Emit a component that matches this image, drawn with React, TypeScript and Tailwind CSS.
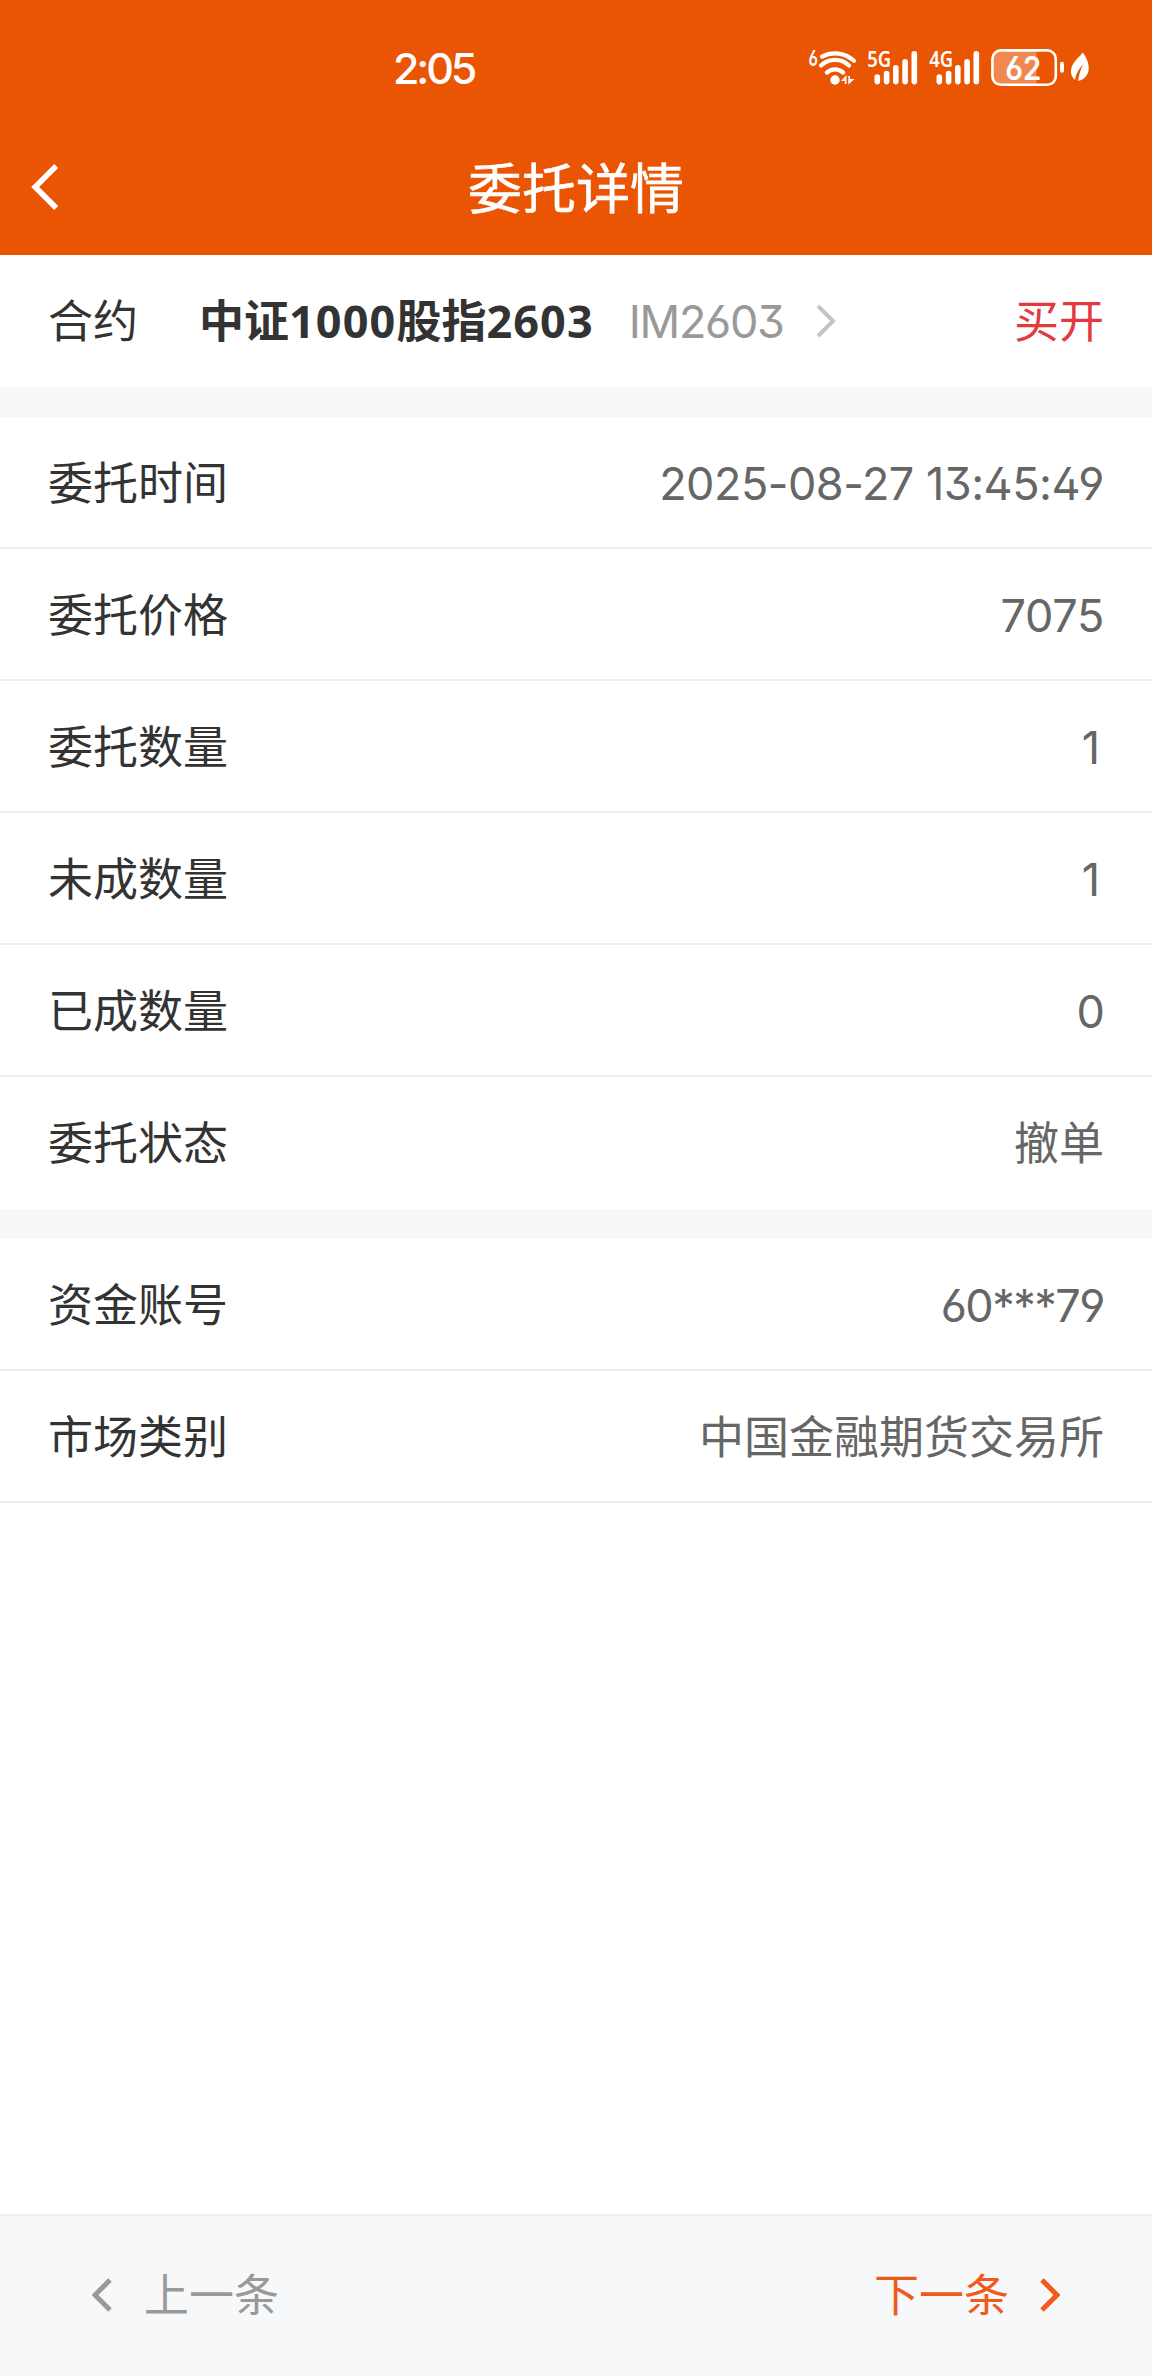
import type { ReactNode } from 'react';

const numeric = "pt-[2px] font-[Inter] [font-feature-settings:'ss01']";

const orderRows = [
  { label: '委托时间', value: '2025-08-27 13:45:49', className: `${numeric} tracking-[-0.5px]` },
  { label: '委托价格', value: '7075', className: `${numeric} tracking-[-0.3px]` },
  { label: '委托数量', value: '1', className: `${numeric} pr-[4px]` },
  { label: '未成数量', value: '1', className: `${numeric} pr-[4px]` },
  { label: '已成数量', value: '0', className: `${numeric} tracking-[-1px]` },
  { label: '委托状态', value: '撤单', className: '' },
];

const accountRows = [
  { label: '资金账号', value: '60***79', className: `${numeric} tracking-[-1.5px]` },
  { label: '市场类别', value: '中国金融期货交易所', className: '' },
];

function Chevron({ dir, className, strokeWidth = 5 }: { dir: 'left' | 'right'; className: string; strokeWidth?: number }) {
  return (
    <svg viewBox="0 0 20 34" className={className} fill="none" stroke="currentColor" strokeWidth={strokeWidth}>
      <path d={dir === 'left' ? 'M18 2 L3 17 L18 32' : 'M2 2 L17 17 L2 32'} />
    </svg>
  );
}

function WifiIcon() {
  return (
    <svg viewBox="0 -8 50 56" className="h-14 w-[50px]" fill="none" stroke="currentColor" strokeLinecap="round">
      <text x="0.5" y="17.5" fontSize="22" fontWeight="600" fill="currentColor" stroke="none" textLength="9.5" lengthAdjust="spacingAndGlyphs" className="font-[Inter] [font-feature-settings:'ss01']">
        6
      </text>
      <g strokeWidth="4.2">
        <path d="M14 8.6 A28 28 0 0 1 46 12.8" />
        <path d="M13 17.6 A20 20 0 0 1 41 17.6" />
        <path d="M18.8 24.6 A12 12 0 0 1 35.2 24.6" />
      </g>
      <circle cx="27" cy="32" r="4.7" fill="currentColor" stroke="none" />
      <path d="M33 33 L38.5 27 V36 H36.8 V33 Z M40.3 28 H42 V31 H46.5 L40.3 36.5 Z" fill="currentColor" stroke="none" />
    </svg>
  );
}

function SignalIcon({ label }: { label: string }) {
  const bars = [
    { x: 7.5, y: 26.3 },
    { x: 16.8, y: 22.7 },
    { x: 26, y: 17 },
    { x: 35.3, y: 11 },
    { x: 44.5, y: 2.9 },
  ];
  return (
    <svg viewBox="0 -8 51 56" className="h-14 w-[51px]" fill="currentColor">
      <text x="0.3" y="18.8" fontSize="22" fontWeight="600" textLength="24" lengthAdjust="spacingAndGlyphs">
        {label}
      </text>
      {bars.map((b) => (
        <rect key={b.x} x={b.x} y={b.y} width="5.6" height={36.4 - b.y} rx="2.8" />
      ))}
    </svg>
  );
}

function BatteryIcon() {
  return (
    <svg viewBox="0 -8 74 56" className="h-14 w-[74px]" fill="currentColor">
      <path d="M10 2 H45.5 V37 H10 A8 8 0 0 1 2 29 V10 A8 8 0 0 1 10 2 Z" opacity="0.3" />
      <rect x="1.4" y="2.4" width="63.4" height="34.4" rx="8.5" fill="none" stroke="currentColor" strokeWidth="2.6" />
      <rect x="69" y="13.8" width="4" height="11" rx="2" />
      <text x="14.2" y="31.6" fontSize="33" fontWeight="600" textLength="36" lengthAdjust="spacingAndGlyphs" className="font-[Inter] [font-feature-settings:'ss01']">
        62
      </text>
    </svg>
  );
}

function LeafIcon() {
  return (
    <svg viewBox="0 -8 20 56" className="h-14 w-5">
      <path d="M12.8 4.6 C17.5 11 19.5 17.5 18.5 22.5 C17.5 28.5 12.5 32.5 8 32.8 C9 27 10.5 21 13.2 16.2 C8.8 20.5 6 26 5 31.8 C0.5 28.5 0 22 2.5 17 C5 12 10 8.5 12.8 4.6 Z" fill="currentColor" />
    </svg>
  );
}

function Row({ label, className, children }: { label: string; className: string; children: ReactNode }) {
  return (
    <div className="flex h-[132px] items-center justify-between border-b-2 border-[#eeeeee] px-12 pt-[2px]">
      <span className="text-[#333333]">{label}</span>
      <span className={`text-[#666666] ${className}`}>{children}</span>
    </div>
  );
}

export default function App() {
  return (
    <div className="flex h-[2376px] w-[1152px] flex-col bg-white font-['Noto_Sans','Noto_Sans_CJK_SC',sans-serif] text-[45px] leading-[60px]">
      <header className="h-[255px] bg-[#ea5504] text-white">
        <div className="flex h-[120px] items-center pt-4 pl-[393px]">
          <span className="w-[415px] font-[Inter] text-[43px] font-medium tracking-[-3.2px]">2:05</span>
          <div className="flex items-center">
            <WifiIcon />
            <div className="ml-[9px] flex gap-[11px]">
              <SignalIcon label="5G" />
              <SignalIcon label="4G" />
            </div>
            <div className="ml-[11px] flex gap-[5px]">
              <BatteryIcon />
              <LeafIcon />
            </div>
          </div>
        </div>
        <div className="flex h-[133px] items-center px-[31px]">
          <Chevron dir="left" className="h-[48px] w-[28px]" strokeWidth={4} />
          <h1 className="flex-1 pt-[2px] pr-[28px] text-center text-[54px] [-webkit-text-stroke:0.6px_white]">委托详情</h1>
        </div>
      </header>

      <section className="flex h-[132px] items-center px-12">
        <span className="w-[151px] text-[#333333]">合约</span>
        <span className="font-bold text-[#333333]">
          中证<span className="tracking-[1.1px]">1000</span>股指<span className="tracking-[1.1px]">2603</span>
        </span>
        <span className={`ml-[35px] tracking-[-1.3px] text-[#999999] ${numeric}`}>IM2603</span>
        <Chevron dir="right" className="ml-[32px] h-[34px] w-5 text-[#c4c4c4]" strokeWidth={4} />
        <span className="ml-auto text-[#e43a3e]">买开</span>
      </section>

      <div className="h-[30px] bg-[#f6f8fa]" />

      {/* the last row runs straight into the grey gap */}
      <section className="[&>div:last-child]:border-white">
        {orderRows.map((row) => (
          <Row key={row.label} label={row.label} className={row.className}>{row.value}</Row>
        ))}
      </section>

      <div className="h-[30px] bg-[#f6f8fa]" />

      <section>
        {accountRows.map((row) => (
          <Row key={row.label} label={row.label} className={row.className}>{row.value}</Row>
        ))}
      </section>

      <footer className="mt-auto flex h-[162px] items-center justify-between border-t-2 border-[#eeeeee] bg-[#f6f8fa] px-[92px] pb-[2px]">
        <button className="flex items-center gap-[32px] text-[#999999]">
          <Chevron dir="left" className="h-[34px] w-5" />
          上一条
        </button>
        <button className="flex items-center gap-[31px] text-[#f05a1a]">
          下一条
          <Chevron dir="right" className="h-[34px] w-5" />
        </button>
      </footer>
    </div>
  );
}
